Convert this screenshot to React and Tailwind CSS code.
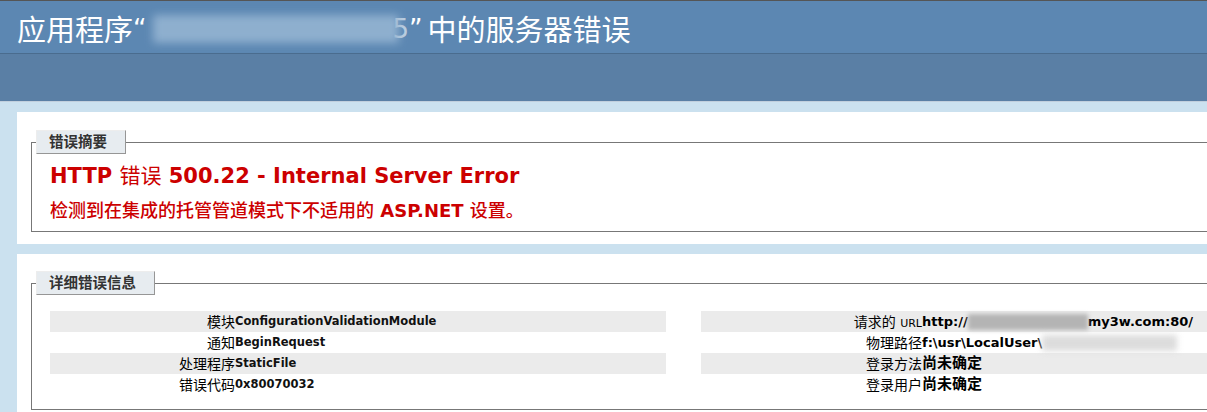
import React from 'react';

const leftRows = [
  { label: '模块', value: 'ConfigurationValidationModule', alt: true },
  { label: '通知', value: 'BeginRequest' },
  { label: '处理程序', value: 'StaticFile', alt: true },
  { label: '错误代码', value: '0x80070032' },
];

const Legend = ({ children }) => (
  <legend className="-ml-[14px] h-[24px] pl-[12px] pr-[18px] flex items-center bg-[#E7ECF0] border border-t-[#EDEDED] border-l-[#EDEDED] border-r-[#969696] border-b-[#969696] text-[#333333] text-[14.5px] font-bold leading-none">
    {children}
  </legend>
);

export default function App() {
  return (
    <div className="w-[1207px] h-[412px] overflow-hidden bg-[#CBE1EF] font-['DejaVu_Sans','Noto_Sans_CJK_SC',sans-serif] text-black">
      {/* header */}
      <div className="h-px bg-[#555555]" />
      <div className="h-[52px] bg-[#5C87B2] flex items-center pl-[17px] pt-[3px]">
        <h1 className="flex items-center text-[29px] leading-none text-white font-normal font-['Noto_Sans_CJK_SC',sans-serif] whitespace-nowrap">
          应用程序<span className="font-['DejaVu_Sans'] text-[26px]">“</span>
          <span className="inline-block ml-[6px] w-[246px] h-[28px] bg-[#94b4d2] blur-[4px] opacity-90" />
          <span className="-ml-[6px] font-['DejaVu_Sans'] text-[26px] text-white/60">5</span>
          <span className="font-['DejaVu_Sans'] text-[26px] mr-[5px]">”</span>中的服务器错误
        </h1>
      </div>
      <div className="h-[49px] bg-[#5A7FA5] border-t border-t-[#4A6C8E] border-b border-b-[#C1CFDD]" />

      <div className="pl-[17px] pt-[10px] flex flex-col gap-[10px] w-[1350px]">
        {/* summary */}
        <div className="bg-white pt-[18px] pl-[14px] pb-[12px]">
          <fieldset className="border border-[#777777] pl-[18px] pb-[10px]">
            <Legend>错误摘要</Legend>
            <h2 className="mt-[10px] text-[21px] leading-[24px] font-bold text-[#CC0000] whitespace-nowrap">
              HTTP <span className="font-normal">错误</span> 500.22 - Internal Server Error
            </h2>
            <h3 className="mt-[12px] text-[18px] leading-[21px] font-bold text-[#CC0000] whitespace-nowrap">
              <span className="font-medium">检测到在集成的托管管道模式下不适用的</span> ASP.NET <span className="font-medium">设置。</span>
            </h3>
          </fieldset>
        </div>

        {/* details */}
        <div className="bg-white pt-[17px] pl-[14px] pb-[12px]">
          <fieldset className="border border-[#777777] pl-[18px] pb-[14px]">
            <Legend>详细错误信息</Legend>
            <div className="mt-[16px] flex gap-[35px]">
              <div className="w-[616px] flex flex-col">
                {leftRows.map((r) => (
                  <div key={r.label} className={`h-[21px] flex items-center ${r.alt ? 'bg-[#EBEBEB]' : ''}`}>
                    <div className="w-[185px] text-right text-[14px] leading-none">{r.label}</div>
                    <div className="text-[11.5px] font-bold leading-none text-[#111]">{r.value}</div>
                  </div>
                ))}
              </div>
              <div className="w-[560px] flex flex-col">
                <div className="h-[21px] flex items-center bg-[#EBEBEB] whitespace-nowrap">
                  <div className="w-[221px] text-right text-[14px] leading-none">
                    请求的 <span className="text-[11px]">URL</span>
                  </div>
                  <div className="flex items-center text-[13px] font-bold leading-none">
                    http://
                    <span className="inline-block w-[120px] h-[16px] bg-[#b4b4b4] blur-[2px]" />
                    my3w.com:80/
                  </div>
                </div>
                <div className="h-[21px] flex items-center whitespace-nowrap">
                  <div className="w-[221px] text-right text-[14px] leading-none">物理路径</div>
                  <div className="flex items-center text-[13px] font-bold leading-none">
                    f:\usr\LocalUser\
                    <span className="inline-block w-[135px] h-[16px] bg-[#dcdcdc] blur-[3px]" />
                  </div>
                </div>
                <div className="h-[21px] flex items-center bg-[#EBEBEB] whitespace-nowrap">
                  <div className="w-[221px] text-right text-[14px] leading-none">登录方法</div>
                  <div className="text-[15px] font-bold leading-none">尚未确定</div>
                </div>
                <div className="h-[21px] flex items-center whitespace-nowrap">
                  <div className="w-[221px] text-right text-[14px] leading-none">登录用户</div>
                  <div className="text-[15px] font-bold leading-none">尚未确定</div>
                </div>
              </div>
            </div>
          </fieldset>
        </div>
      </div>
    </div>
  );
}
